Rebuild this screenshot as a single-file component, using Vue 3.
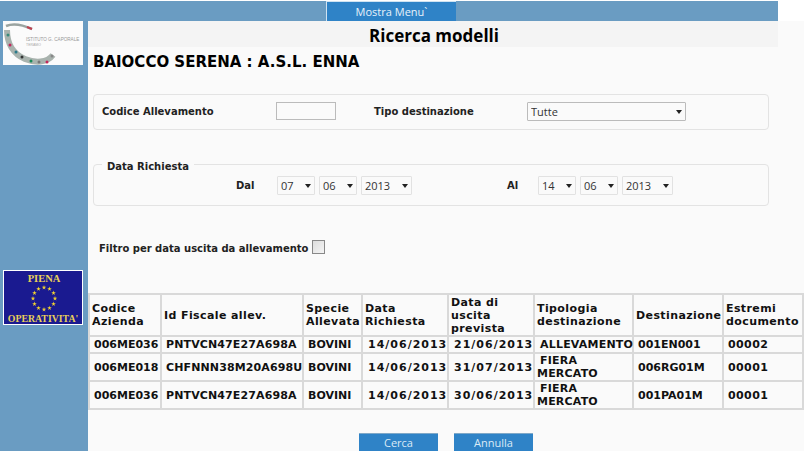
<script setup>
const rows = [
  { az: '006ME036', id: 'PNTVCN47E27A698A', sp: 'BOVINI', dr: '14/06/2013', du: '21/06/2013', tip: 'ALLEVAMENTO', dest: '001EN001', doc: '00002', cls: 'r1' },
  { az: '006ME018', id: 'CHFNNN38M20A698U', sp: 'BOVINI', dr: '14/06/2013', du: '31/07/2013', tip: 'FIERA MERCATO', dest: '006RG01M', doc: '00001', cls: 'r2' },
  { az: '006ME036', id: 'PNTVCN47E27A698A', sp: 'BOVINI', dr: '14/06/2013', du: '30/06/2013', tip: 'FIERA MERCATO', dest: '001PA01M', doc: '00001', cls: 'r3' },
]
const stars = Array.from({ length: 12 }, (_, i) => {
  const a = (i * Math.PI) / 6
  return { x: 41 + 11 * Math.sin(a), y: 28.5 - 11 * Math.cos(a) }
})
const dots = [
  [5, 14, '#3a8a7a'], [7, 24, '#c2285a'], [13, 31, '#2a7a8a'], [19, 36, '#333'], [28, 40, '#1a8a5a'], [36, 41, '#777'], [44, 41, '#c2285a'], [49, 35, '#888'],
]
</script>

<template>
  <div class="page">
    <div class="topbar">
      <button class="tab">Mostra Menu`</button>
    </div>
    <div class="body">
      <aside class="side">
        <svg class="logo" viewBox="0 0 80 44" width="80" height="44">
          <rect width="80" height="44" fill="#fbfbfb" />
          <path d="M4 9 C4 22 10 33 22 38 C32 42 44 42 50 34" fill="none" stroke="#a9b3ae" stroke-width="6" />
          <path d="M3 5 C10 2 18 3 29 8" fill="none" stroke="#9aa3a0" stroke-width="2.5" />
          <path d="M24 6 L29 8" fill="none" stroke="#c04050" stroke-width="2" />
          <circle v-for="(d, i) in dots" :key="i" :cx="d[0]" :cy="d[1]" r="1.5" :fill="d[2]" />
          <text x="23" y="20" class="logo-t">ISTITUTO G. CAPORALE</text>
          <text x="23" y="25" class="logo-s">TERAMO</text>
        </svg>
        <svg class="flag" viewBox="0 0 80 55" width="80" height="55">
          <rect x="0.5" y="0.5" width="79" height="54" fill="#1a1a90" stroke="#fff" />
          <text x="41" y="12" text-anchor="middle" class="flag-t">PIENA</text>
          <polygon v-for="(s, i) in stars" :key="i" :points="`${s.x},${s.y - 2.4} ${s.x + 1.4},${s.y + 1.9} ${s.x - 2.3},${s.y - 0.7} ${s.x + 2.3},${s.y - 0.7} ${s.x - 1.4},${s.y + 1.9}`" fill="#f2d230" />
          <text x="40" y="52" text-anchor="middle" class="flag-o">OPERATIVITA'</text>
        </svg>
      </aside>
      <main class="main">
        <div class="title">Ricerca modelli</div>
        <h2 class="user">BAIOCCO SERENA : A.S.L. ENNA</h2>

        <fieldset class="box first">
          <span class="lab">Codice Allevamento</span>
          <input class="code" type="text" />
          <span class="lab">Tipo destinazione</span>
          <span class="sel wide"><select><option>Tutte</option></select></span>
        </fieldset>

        <fieldset class="box second">
          <legend>Data Richiesta</legend>
          <span class="lab dal">Dal</span>
          <span class="sel s"><select><option>07</option></select></span>
          <span class="sel s"><select><option>06</option></select></span>
          <span class="sel y"><select><option>2013</option></select></span>
          <span class="lab al">Al</span>
          <span class="sel s"><select><option>14</option></select></span>
          <span class="sel s"><select><option>06</option></select></span>
          <span class="sel y"><select><option>2013</option></select></span>
        </fieldset>

        <div class="filter">
          <span class="lab">Filtro per data uscita da allevamento</span>
          <input class="check" type="checkbox" />
        </div>

        <table class="grid">
          <colgroup>
            <col class="c1" /><col class="c2" /><col class="c3" /><col class="c4" />
            <col class="c5" /><col class="c6" /><col class="c7" /><col class="c8" />
          </colgroup>
          <thead>
            <tr>
              <th>Codice Azienda</th><th>Id Fiscale allev.</th><th>Specie Allevata</th><th>Data Richiesta</th>
              <th>Data di uscita prevista</th><th>Tipologia destinazione</th><th>Destinazione</th><th>Estremi documento</th>
            </tr>
          </thead>
          <tbody>
            <tr v-for="(r, i) in rows" :key="i" :class="r.cls">
              <td>{{ r.az }}</td><td class="fisc">{{ r.id }}</td><td>{{ r.sp }}</td><td class="date">{{ r.dr }}</td>
              <td class="date">{{ r.du }}</td><td class="tip">{{ r.tip }}</td><td>{{ r.dest }}</td><td class="doc">{{ r.doc }}</td>
            </tr>
          </tbody>
        </table>

        <div class="actions">
          <button class="btn">Cerca</button>
          <button class="btn">Annulla</button>
        </div>
      </main>
    </div>
  </div>
</template>

<style scoped>
.page { width: 804px; height: 451px; overflow: hidden; background: #fff; font-family: "DejaVu Sans", Verdana, sans-serif; color: #111; padding-top: 1px; box-sizing: border-box; }
.topbar { width: 778px; height: 20px; background: #6a9cc2; padding-left: 326px; box-sizing: border-box; }
.tab { display: block; width: 130px; height: 20px; margin: 0; padding: 0; background: #2f83c7; border: 0; border-top: 1px solid #cfe3f2; border-left: 1px solid #cfe3f2; color: #e8f2fa; font: 11px "Open Sans", sans-serif; }
.body { display: flex; height: 430px; }
.side { width: 88px; flex: none; background: #6a9cc2; padding-left: 3px; box-sizing: border-box; display: flex; flex-direction: column; }
.logo { display: block; }
.flag { display: block; margin-top: 205px; }
.logo-t { font: 4.6px "Liberation Sans", sans-serif; fill: #999; }
.logo-s { font: 3.5px "Liberation Sans", sans-serif; fill: #aaa; }
.flag-t { font: bold 10.5px "Liberation Serif", serif; fill: #e8cf5a; }
.flag-o { font: bold 9.8px "Liberation Serif", serif; fill: #e8cf5a; }
.main { width: 716px; background: #fafafa; }
.title { width: 690px; height: 26px; padding-left: 2px; box-sizing: border-box; background: #f4f4f4; text-align: center; font: bold 17px/29px "Open Sans", sans-serif; color: #000; }
.user { margin: 6px 0 0 5px; font: bold 15px/18px "DejaVu Sans", sans-serif; color: #000; }
.box { margin: 0 0 0 5px; width: 676px; box-sizing: border-box; border: 1px solid #e3e3e3; border-radius: 4px; padding: 0; display: flex; align-items: center; min-inline-size: 0; }
.first { height: 36px; margin-top: 23px; padding-bottom: 2px; }
.second { height: 48px; margin-top: 28px; padding-bottom: 5px; }
.second legend { margin-left: 8px; padding: 0 5px; font: bold 10px/12px "DejaVu Sans", sans-serif; color: #222; transform: translateY(3px); }
.lab { font: bold 10px/12px "DejaVu Sans", sans-serif; color: #222; white-space: nowrap; padding-top: 1px; }
.first .lab:first-child { margin-left: 8px; width: 174px; }
.code { width: 60px; height: 18px; box-sizing: border-box; border: 1px solid #bbb; background: #fafafa; margin: 0 38px 0 0; padding: 0; }
.first .lab:nth-child(3) { width: 153px; }
.sel { position: relative; display: block; height: 19px; margin-right: 4px; }
.sel select { appearance: none; display: block; width: 100%; height: 100%; box-sizing: border-box; border: 1px solid #e2e2e2; border-radius: 1px; background: #fafafa; padding: 0 0 0 3px; font: 11px "Open Sans", sans-serif; color: #333; }
.sel::after { content: ""; position: absolute; right: 4px; top: 8px; border: 3.5px solid transparent; border-top: 4px solid #222; border-bottom: 0; }
.wide { width: 159px; }
.wide select { border-color: #bbb; }
.s { width: 38px; }
.y { width: 51px; }
.dal { margin-left: 142px; width: 41px; }
.al { margin-left: 91px; width: 31px; }
.filter { display: flex; align-items: center; margin: 33px 0 0 11px; height: 16px; }
.filter .lab { width: 213px; padding-top: 4px; }
.check { appearance: none; width: 13px; height: 14px; margin: 0; box-sizing: border-box; border: 1px solid #888; background: linear-gradient(135deg, #ddd, #f4f4f4); }
.grid { margin-top: 38px; width: 714px; table-layout: fixed; border-collapse: collapse; border: 2px solid #d9d9d9; background: #fafafa; font: bold 11px/13px "DejaVu Sans", sans-serif; color: #111; }
.c1 { width: 72px; } .c2 { width: 142px; } .c3 { width: 59px; } .c4 { width: 86px; }
.c5 { width: 86px; } .c6 { width: 99px; } .c7 { width: 90px; } .c8 { width: 80px; }
.grid th, .grid td { border: 2px solid #d9d9d9; text-align: left; }
.grid th { height: 40px; padding: 0 0 0 2px; font-weight: bold; letter-spacing: 0.4px; }
.grid td { padding: 0 0 0 4px; white-space: nowrap; }
.r1 td { height: 15px; }
.r2 td { height: 26px; }
.r3 td { height: 25px; }
.grid td.fisc { letter-spacing: 0.12px; }
.grid td.date { letter-spacing: 1px; padding-left: 5px; }
.grid td.doc { letter-spacing: 0.4px; }
.grid td.tip { white-space: normal; padding-left: 2px; text-indent: 3px; letter-spacing: 0.2px; }
.actions { margin: 23px 0 0 271px; display: flex; gap: 16px; }
.btn { width: 79px; height: 18px; margin: 0; padding: 0; border: 0; border-top: 1px solid #7fa8c8; background: #2f83c7; color: #dbeaf6; font: 11px "Open Sans", sans-serif; }
</style>
